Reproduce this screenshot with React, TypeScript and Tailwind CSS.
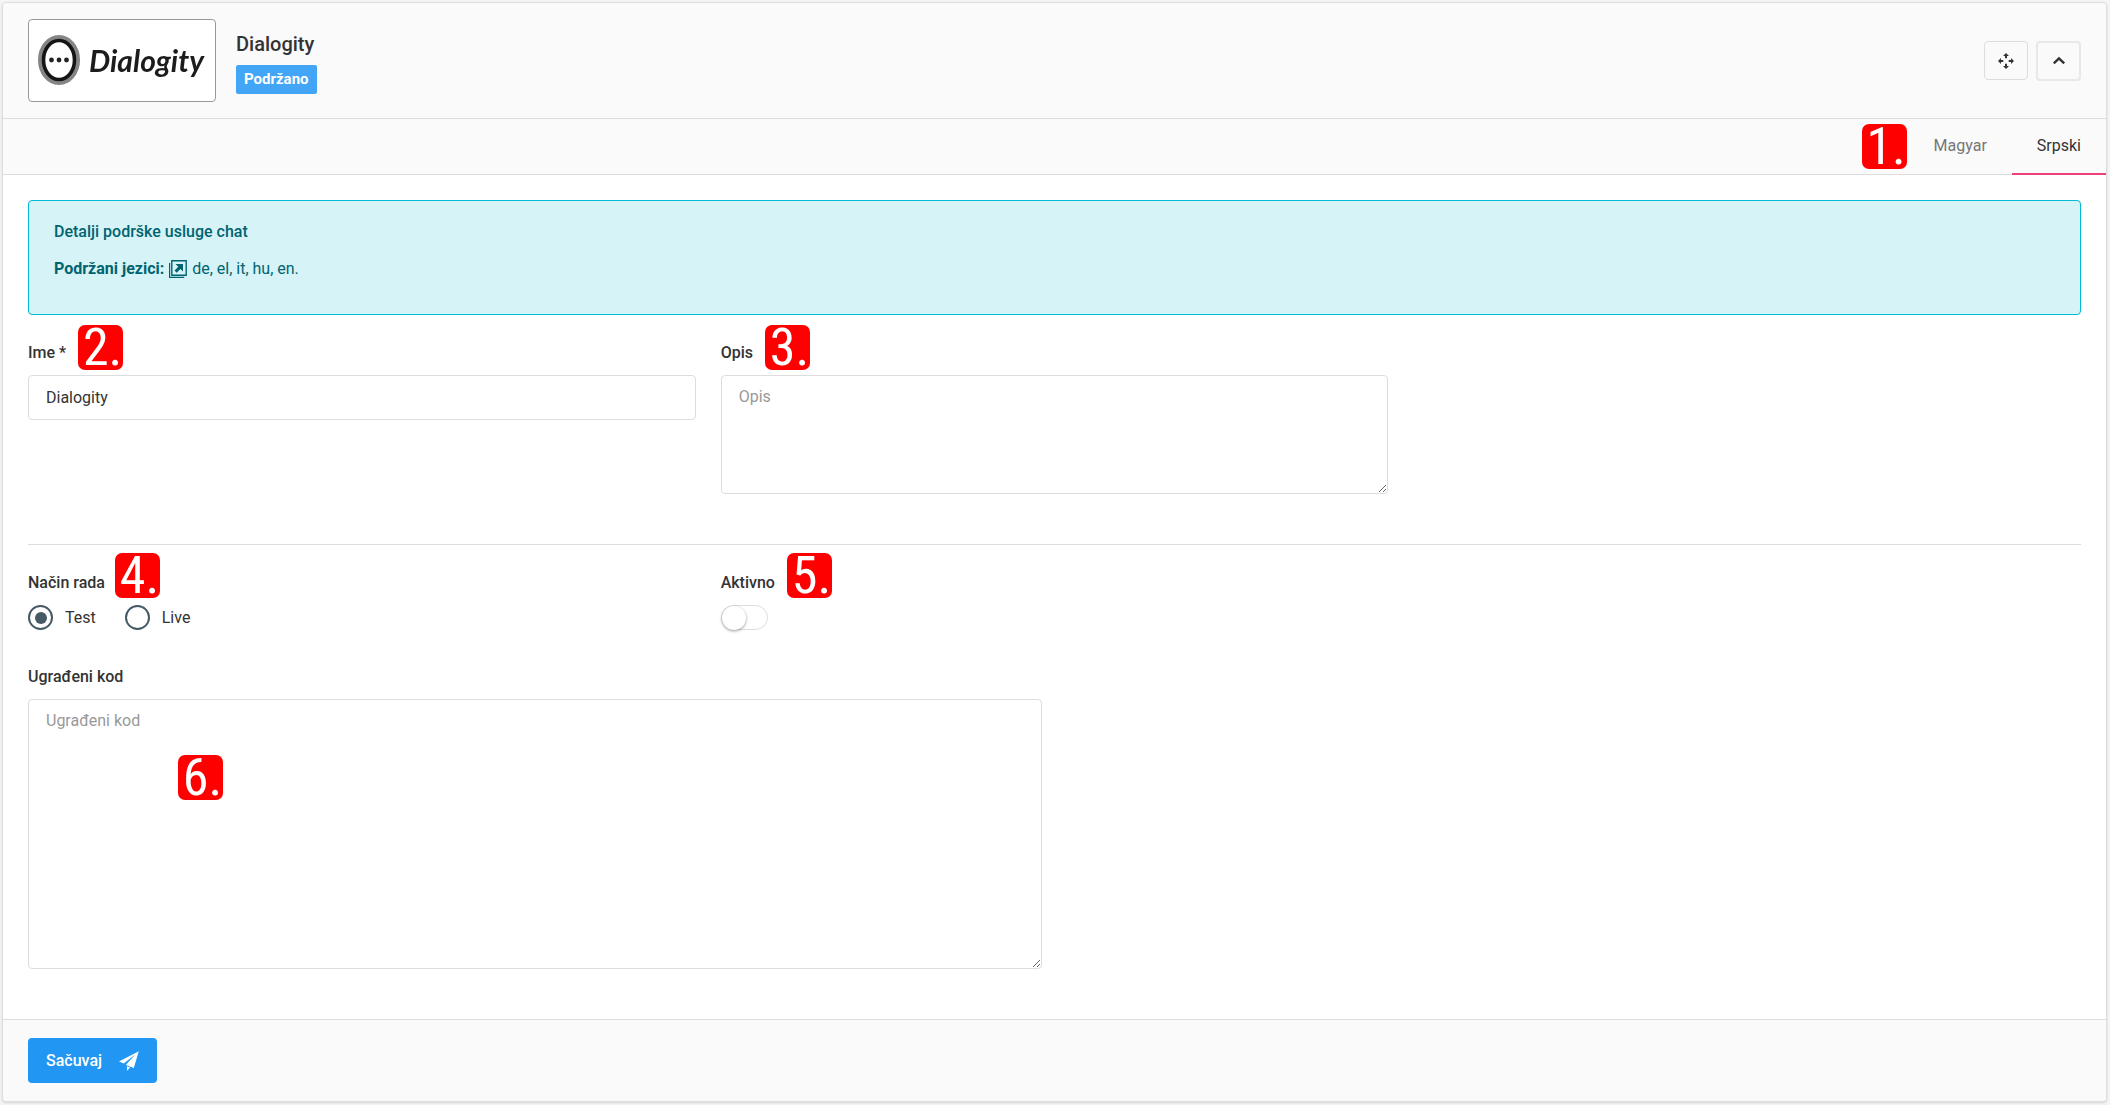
import React, { useState } from "react";

function Marker({ n, className = "" }: { n: number; className?: string }) {
  return (
    <span
      className={`flex h-[45px] w-[45px] shrink-0 items-center justify-center whitespace-nowrap rounded-[7px] bg-[#ff0000] pl-1 font-['Liberation_Sans_Narrow','Arial_Narrow','Roboto_Condensed','Liberation_Sans',sans-serif] text-[52px] leading-[45px] font-normal text-white ${className}`}
    >
      {n}.
    </span>
  );
}

function Logo() {
  return (
    <svg
      viewBox="0 0 186 81"
      className="h-[81px] w-[186px] blur-[0.5px]"
      role="img"
      aria-label="Dialogity"
    >
      <ellipse cx="30" cy="40" rx="18.5" ry="22.5" fill="#fff" stroke="#858585" strokeWidth="5" />
      <ellipse cx="30" cy="40" rx="15.5" ry="19.5" fill="#fff" stroke="#151515" strokeWidth="3.6" />
      <circle cx="22.500" cy="40" r="2.4" fill="#222" />
      <circle cx="30" cy="40" r="2.4" fill="#222" />
      <circle cx="37.500" cy="40" r="2.4" fill="#222" />
      <text
        x="60"
        y="52"
        fontSize="30"
        fontStyle="italic"
        fontWeight="700"
        fill="#1c1c1c"
        className="font-[Lato,sans-serif]"
      >
        Dialogity
      </text>
    </svg>
  );
}

function MoveIcon() {
  return (
    <svg viewBox="0 0 16 16" className="h-4 w-4" fill="currentColor" aria-hidden="true">
      <path d="M8 0l3 3H9v2.300H7V3H5zM8 16l3-3H9v-2.300H7V13H5zM0 8l3-3v2h2.300v2H3v2zM16 8l-3-3v2h-2.300v2H13v2z" />
    </svg>
  );
}

function ChevronUpIcon() {
  return (
    <svg viewBox="0 0 16 16" className="h-4 w-4" fill="none" stroke="currentColor" strokeWidth="2.4" aria-hidden="true">
      <path d="M2.800 10.300L8 5.300l5.200 5" />
    </svg>
  );
}

function NewTabIcon() {
  return (
    <svg viewBox="0 0 18 18" className="mx-px inline-block h-[18px] w-[18px] align-[-4px]" fill="none" stroke="currentColor" aria-hidden="true">
      <path d="M2.800.800h14.400v14.400H2.800z" strokeWidth="1.4" />
      <path d="M.600 3v14.400h14.600" strokeWidth="1.2" />
      <path d="M6.500 4h7.500v7.500l-2.500-2.500-3.800 3.800-2.200-2.200 3.800-3.800z" fill="currentColor" stroke="none" />
    </svg>
  );
}

function PlaneIcon() {
  return (
    <svg viewBox="0 0 20 20" className="h-5 w-5" fill="currentColor" aria-hidden="true">
      <path d="M19.800.300L0 10.500l4.800 2L16.500 3.200 7 13.800v.100l7.800 3.200zM8 15.200v4.500l3.200-3.200z" />
    </svg>
  );
}

const labelClass = "block text-base leading-[25px] font-medium";
const fieldClass =
  "block w-full rounded-[4px] border border-[#ddd] bg-white px-[17px] text-base text-[#333] outline-none placeholder:text-[#999]";

function LabelRow({ n, gap, children }: { n?: number; gap?: string; children: React.ReactNode }) {
  return (
    <div className="relative mb-[10px] flex items-center">
      {children}
      {n !== undefined && (
        <div className="relative">
          <Marker n={n} className={`absolute ${gap ?? ""}`} />
        </div>
      )}
    </div>
  );
}

function Radio({ label, checked, onChange }: { label: string; checked: boolean; onChange: () => void }) {
  return (
    <label className="flex items-center gap-3 text-base leading-[25px]">
      <input
        type="radio"
        name="mode"
        checked={checked}
        onChange={onChange}
        className="grid h-[25px] w-[25px] appearance-none place-content-center rounded-full border-2 border-[#455a64] before:h-[12px] before:w-[12px] before:rounded-full checked:before:bg-[#455a64]"
      />
      {label}
    </label>
  );
}

export default function App() {
  const [mode, setMode] = useState("test");
  const [active, setActive] = useState(false);
  return (
    <div className="min-h-screen bg-[#f5f5f5] py-[2px] pr-[3px] pl-[2px] font-[Roboto,sans-serif] text-base text-[#333]">
      <form
        className="rounded-[4px] border border-[#ddd] bg-white shadow-sm"
        onSubmit={(e) => e.preventDefault()}
      >
        <header className="flex items-center justify-between rounded-t-[4px] border-b border-[#ddd] bg-[#fafafa] px-[25px] py-4">
          <div className="flex items-center gap-5">
            <div className="rounded-[4px] border border-[#999] bg-white">
              <Logo />
            </div>
            <div className="flex flex-col items-start gap-2 pt-1">
              <h1 className="text-xl leading-[25px] font-medium">Dialogity</h1>
              <span className="rounded-[2px] bg-[#42a5f5] px-2 text-[15px] leading-[29px] font-bold text-white">
                Podržano
              </span>
            </div>
          </div>
          <div className="flex items-center gap-2">
            <button type="button" aria-label="Premesti" className="flex h-[39px] w-[44px] items-center justify-center rounded-[4px] border border-[#ddd]">
              <MoveIcon />
            </button>
            <button type="button" aria-label="Skupi" className="flex h-[40px] w-[45px] items-center justify-center rounded-[4px] border-2 border-[#e8e8e8]">
              <ChevronUpIcon />
            </button>
          </div>
        </header>

        <nav className="flex items-center justify-end border-b border-[#ddd] bg-[#fafafa]">
          <Marker n={1} className="mr-[2px]" />
          <button type="button" className="-mb-px border-b-2 border-transparent px-[25px] leading-[54px] text-[#777]">
            Magyar
          </button>
          <button type="button" className="-mb-px border-b-2 border-[#ec407a] px-[25px] leading-[54px]">
            Srpski
          </button>
        </nav>

        <main className="px-[25px] pt-[25px] pb-[50px]">
          <section className="rounded-[4px] border border-[#00bcd4] bg-[#d6f3f7] px-[25px] pt-[18px] pb-[33px] leading-[25px] text-[#006470]">
            <h2 className="mb-3 font-medium">Detalji podrške usluge chat</h2>
            <p>
              <b className="font-bold">Podržani jezici:</b> <NewTabIcon /> de, el, it, hu, en.
            </p>
          </section>

          <div className="mt-[25px] grid grid-cols-3 gap-[25px]">
            <div>
              <LabelRow n={2} gap="-top-[28px] left-3">
                <label htmlFor="name" className={labelClass}>Ime *</label>
              </LabelRow>
              <input id="name" defaultValue="Dialogity" className={`${fieldClass} h-[45px]`} />
            </div>
            <div>
              <LabelRow n={3} gap="-top-[28px] left-3">
                <label htmlFor="desc" className={labelClass}>Opis</label>
              </LabelRow>
              <textarea id="desc" placeholder="Opis" className={`${fieldClass} h-[119px] py-[9px] leading-[23px]`} />
            </div>
          </div>

          <hr className="mt-[50px] border-[#ddd]" />

          <div className="mt-[25px] grid grid-cols-3 gap-[25px]">
            <div>
              <LabelRow n={4} gap="-top-[30px] left-[10px]">
                <span className={labelClass}>Način rada</span>
              </LabelRow>
              <div className="flex gap-[29px]" role="radiogroup" aria-label="Način rada">
                <Radio label="Test" checked={mode === "test"} onChange={() => setMode("test")} />
                <Radio label="Live" checked={mode === "live"} onChange={() => setMode("live")} />
              </div>
            </div>
            <div>
              <LabelRow n={5} gap="-top-[30px] left-3">
                <label htmlFor="active" className={labelClass}>Aktivno</label>
              </LabelRow>
              <input
                id="active"
                type="checkbox"
                role="switch"
                checked={active}
                onChange={() => setActive(!active)}
                className="flex h-[25px] w-[47px] appearance-none items-center rounded-full border border-[#ddd] bg-white before:h-[24px] before:w-[24px] before:rounded-full before:bg-white before:shadow-[0_1px_3px_rgba(0,0,0,0.4)] checked:justify-end checked:bg-[#64bd63]"
              />
            </div>
          </div>

          <div className="mt-[34px] grid grid-cols-2 gap-[25px]">
            <div>
              <LabelRow>
                <label htmlFor="code" className={labelClass}>Ugrađeni kod</label>
              </LabelRow>
              <div className="relative">
                <textarea id="code" placeholder="Ugrađeni kod" className={`${fieldClass} h-[270px] py-[9px] leading-[23px]`} />
                <Marker n={6} className="absolute top-14 left-[150px]" />
              </div>
            </div>
          </div>
        </main>

        <footer className="rounded-b-[4px] border-t border-[#ddd] bg-[#fafafa] px-[25px] pt-[18px] pb-[18px]">
          <button type="submit" className="flex h-[45px] items-center gap-[17px] rounded-[4px] bg-[#2196f3] px-[18px] font-medium text-white">
            Sačuvaj
            <PlaneIcon />
          </button>
        </footer>
      </form>
    </div>
  );
}
